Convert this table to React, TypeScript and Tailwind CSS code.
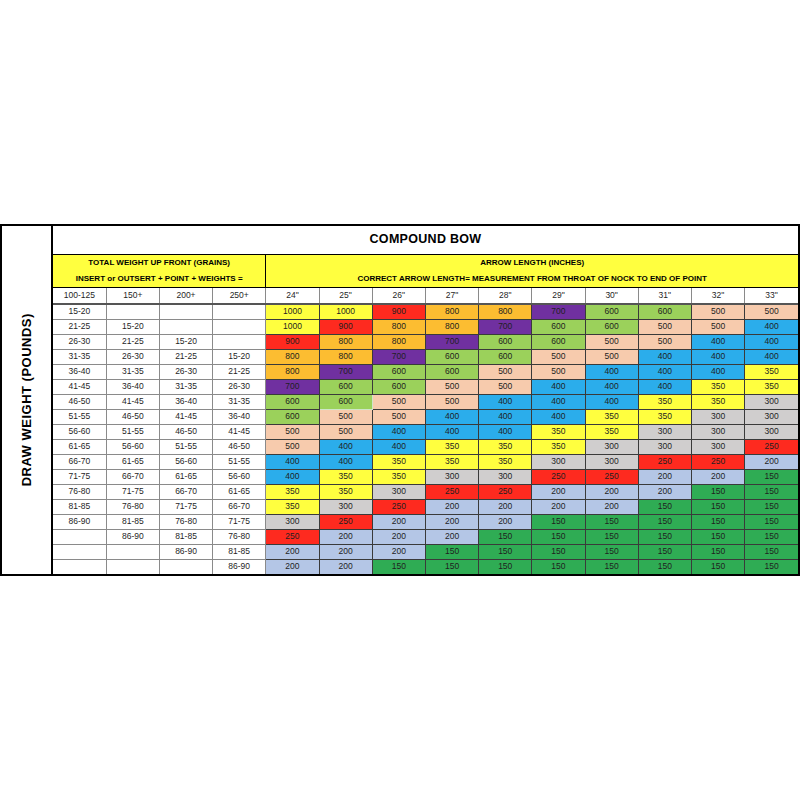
const weights: string[][] = [
  ["15-20", "", "", ""],
  ["21-25", "15-20", "", ""],
  ["26-30", "21-25", "15-20", ""],
  ["31-35", "26-30", "21-25", "15-20"],
  ["36-40", "31-35", "26-30", "21-25"],
  ["41-45", "36-40", "31-35", "26-30"],
  ["46-50", "41-45", "36-40", "31-35"],
  ["51-55", "46-50", "41-45", "36-40"],
  ["56-60", "51-55", "46-50", "41-45"],
  ["61-65", "56-60", "51-55", "46-50"],
  ["66-70", "61-65", "56-60", "51-55"],
  ["71-75", "66-70", "61-65", "56-60"],
  ["76-80", "71-75", "66-70", "61-65"],
  ["81-85", "76-80", "71-75", "66-70"],
  ["86-90", "81-85", "76-80", "71-75"],
  ["", "86-90", "81-85", "76-80"],
  ["", "", "86-90", "81-85"],
  ["", "", "", "86-90"],
];

const spines: number[][] = [
  [1000, 1000, 900, 800, 800, 700, 600, 600, 500, 500],
  [1000, 900, 800, 800, 700, 600, 600, 500, 500, 400],
  [900, 800, 800, 700, 600, 600, 500, 500, 400, 400],
  [800, 800, 700, 600, 600, 500, 500, 400, 400, 400],
  [800, 700, 600, 600, 500, 500, 400, 400, 400, 350],
  [700, 600, 600, 500, 500, 400, 400, 400, 350, 350],
  [600, 600, 500, 500, 400, 400, 400, 350, 350, 300],
  [600, 500, 500, 400, 400, 400, 350, 350, 300, 300],
  [500, 500, 400, 400, 400, 350, 350, 300, 300, 300],
  [500, 400, 400, 350, 350, 350, 300, 300, 300, 250],
  [400, 400, 350, 350, 350, 300, 300, 250, 250, 200],
  [400, 350, 350, 300, 300, 250, 250, 200, 200, 150],
  [350, 350, 300, 250, 250, 200, 200, 200, 150, 150],
  [350, 300, 250, 200, 200, 200, 200, 150, 150, 150],
  [300, 250, 200, 200, 200, 150, 150, 150, 150, 150],
  [250, 200, 200, 200, 150, 150, 150, 150, 150, 150],
  [200, 200, 200, 150, 150, 150, 150, 150, 150, 150],
  [200, 200, 150, 150, 150, 150, 150, 150, 150, 150],
];

const spineColor: Record<number, string> = {
  1000: "bg-[#ffff3f]",
  900: "bg-[#fe2a1f]",
  800: "bg-[#fcbd31]",
  700: "bg-[#7030a0]",
  600: "bg-[#9bd15b]",
  500: "bg-[#f7cbad]",
  400: "bg-[#2badeb]",
  350: "bg-[#ffff3f]",
  300: "bg-[#d0cece]",
  250: "bg-[#fe2a1f]",
  200: "bg-[#b4c6e6]",
  150: "bg-[#2fac54]",
};

const weightHeads = ["100-125", "150+", "200+", "250+"];
const lengths = ["24", "25", "26", "27", "28", "29", "30", "31", "32", "33"];

export default function App() {
  return (
    <div className="w-[800px] h-[800px] bg-white flex items-center font-['Liberation_Sans',Arial,sans-serif] text-[#1f1f1f]">
      <div className="w-full h-[352px] border-2 border-black flex">
        {/* side label */}
        <div className="w-[51px] border-r-2 border-black flex items-center justify-center">
          <div className="-rotate-90 whitespace-nowrap font-bold text-[13px] tracking-[0.5px] text-black">
            DRAW WEIGHT (POUNDS)
          </div>
        </div>

        <table className="flex-1 table-fixed border-collapse text-center">
          <colgroup>
            {Array.from({ length: 14 }).map((_, i) => (
              <col key={i} className="w-[53px]" />
            ))}
          </colgroup>
          <tbody>
            <tr className="h-[28px]">
              <td colSpan={14} className="font-bold text-[12.5px] text-black tracking-[0.3px] border-b border-black">
                COMPOUND BOW
              </td>
            </tr>
            <tr className="h-[32px] bg-[#ffff3f] font-bold text-[8px] text-black leading-[16px]">
              <td colSpan={4} className="border border-black border-l-0">
                <div>TOTAL WEIGHT UP FRONT (GRAINS)</div>
                <div>INSERT or OUTSERT + POINT + WEIGHTS =</div>
              </td>
              <td colSpan={10} className="border border-black border-r-0">
                <div>ARROW LENGTH (INCHES)</div>
                <div>CORRECT ARROW LENGTH= MEASUREMENT FROM THROAT OF NOCK TO END OF POINT</div>
              </td>
            </tr>
            <tr className="h-[17px] text-[8.5px]">
              {weightHeads.map((h, i) => (
                <td key={h} className={`border border-[#8a8a8a] ${i === 0 ? "border-l-0" : ""}`}>
                  {h}
                </td>
              ))}
              {lengths.map((l, i) => (
                <td key={l} className={`border border-[#8a8a8a] ${i === 0 ? "border-l-black" : ""} ${i === 9 ? "border-r-0" : ""}`}>
                  {l}&quot;
                </td>
              ))}
            </tr>
            {spines.map((row, r) => (
              <tr key={r} className={`h-[15px] text-[8.5px] ${r === 0 ? "border-t-2 border-t-[#555]" : ""}`}>
                {weights[r].map((w, i) => (
                  <td key={i} className={`border border-[#8a8a8a] p-0 ${i === 0 ? "border-l-0" : ""} ${r === 17 ? "border-b-0" : ""}`}>
                    {w}
                  </td>
                ))}
                {row.map((v, i) => {
                  const selected = r === 6 && i === 1;
                  return (
                    <td
                      key={i}
                      className={`border p-0 ${spineColor[v]} ${selected ? "border-[#cfe6c8]" : "border-[#3a3a3a]"} ${i === 9 ? "border-r-0" : ""} ${r === 17 ? "border-b-0" : ""}`}
                    >
                      {v}
                    </td>
                  );
                })}
              </tr>
            ))}
          </tbody>
        </table>
      </div>
    </div>
  );
}
